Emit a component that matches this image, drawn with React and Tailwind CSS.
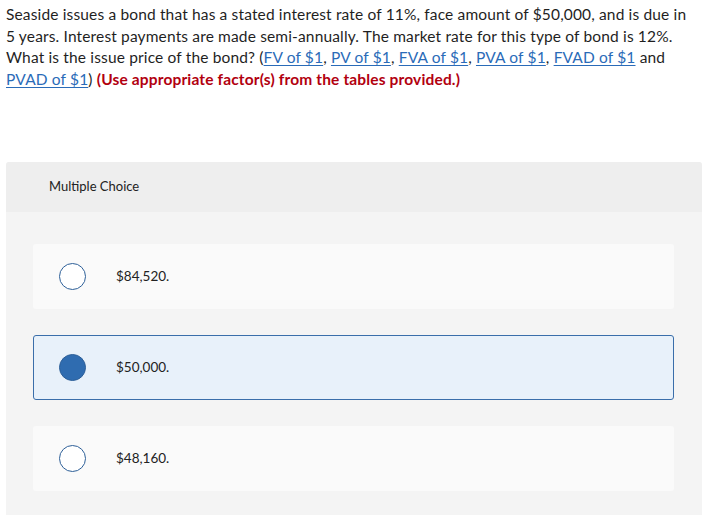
import React from "react";

const links = ["FV of $1", "PV of $1", "FVA of $1", "PVA of $1", "FVAD of $1"];

function Link({ children }) {
  return (
    <a href="#" className="text-[#2a6bb8] underline underline-offset-2 decoration-[1px]">
      {children}
    </a>
  );
}

function Option({ label, selected }) {
  return (
    <div
      className={
        "flex items-center h-[65px] rounded-[3px] pl-[25px] " +
        (selected
          ? "bg-[#e8f1fa] border border-[#3a6eaa]"
          : "bg-[#fafafa] border border-transparent")
      }
    >
      <div
        className={
          "w-[27px] h-[27px] rounded-full border-[1.5px] border-[#2d5f98] " +
          (selected ? "bg-[#2f6cb0]" : "bg-white")
        }
      />
      <div className="ml-[30px] text-[13.5px] text-[#222]">{label}</div>
    </div>
  );
}

export default function App() {
  return (
    <div
      className="w-[725px] h-[515px] bg-white overflow-hidden"
      style={{ fontFamily: "Lato, 'Open Sans', sans-serif" }}
    >
      <div className="px-[6px] pt-[4px] text-[15.5px] leading-[21.5px] tracking-[0.15px] text-[#1f1f1f] whitespace-nowrap">
        Seaside issues a bond that has a stated interest rate of 11%, face amount of $50,000, and is due in
        <br />
        5 years. Interest payments are made semi-annually. The market rate for this type of bond is 12%.
        <br />
        What is the issue price of the bond? (
        {links.map((l, i) => (
          <React.Fragment key={l}>
            <Link>{l}</Link>
            {i < links.length - 1 ? ", " : " and"}
          </React.Fragment>
        ))}
        <br />
        <Link>PVAD of $1</Link>){" "}
        <span className="font-bold text-[#b2000f]">(Use appropriate factor(s) from the tables provided.)</span>
      </div>

      <div className="mt-[72px] ml-[6px] w-[696px] bg-[#f4f4f4] rounded-t-[3px] pb-[30px]">
        <div className="h-[50px] bg-[#eeeeee] flex items-center pl-[43px] text-[13px] text-[#222] rounded-t-[3px]">
          Multiple Choice
        </div>
        <div className="pl-[27px] pr-[28px] pt-[32px] flex flex-col gap-[26px]">
          <Option label="$84,520." />
          <Option label="$50,000." selected />
          <Option label="$48,160." />
        </div>
      </div>
    </div>
  );
}
